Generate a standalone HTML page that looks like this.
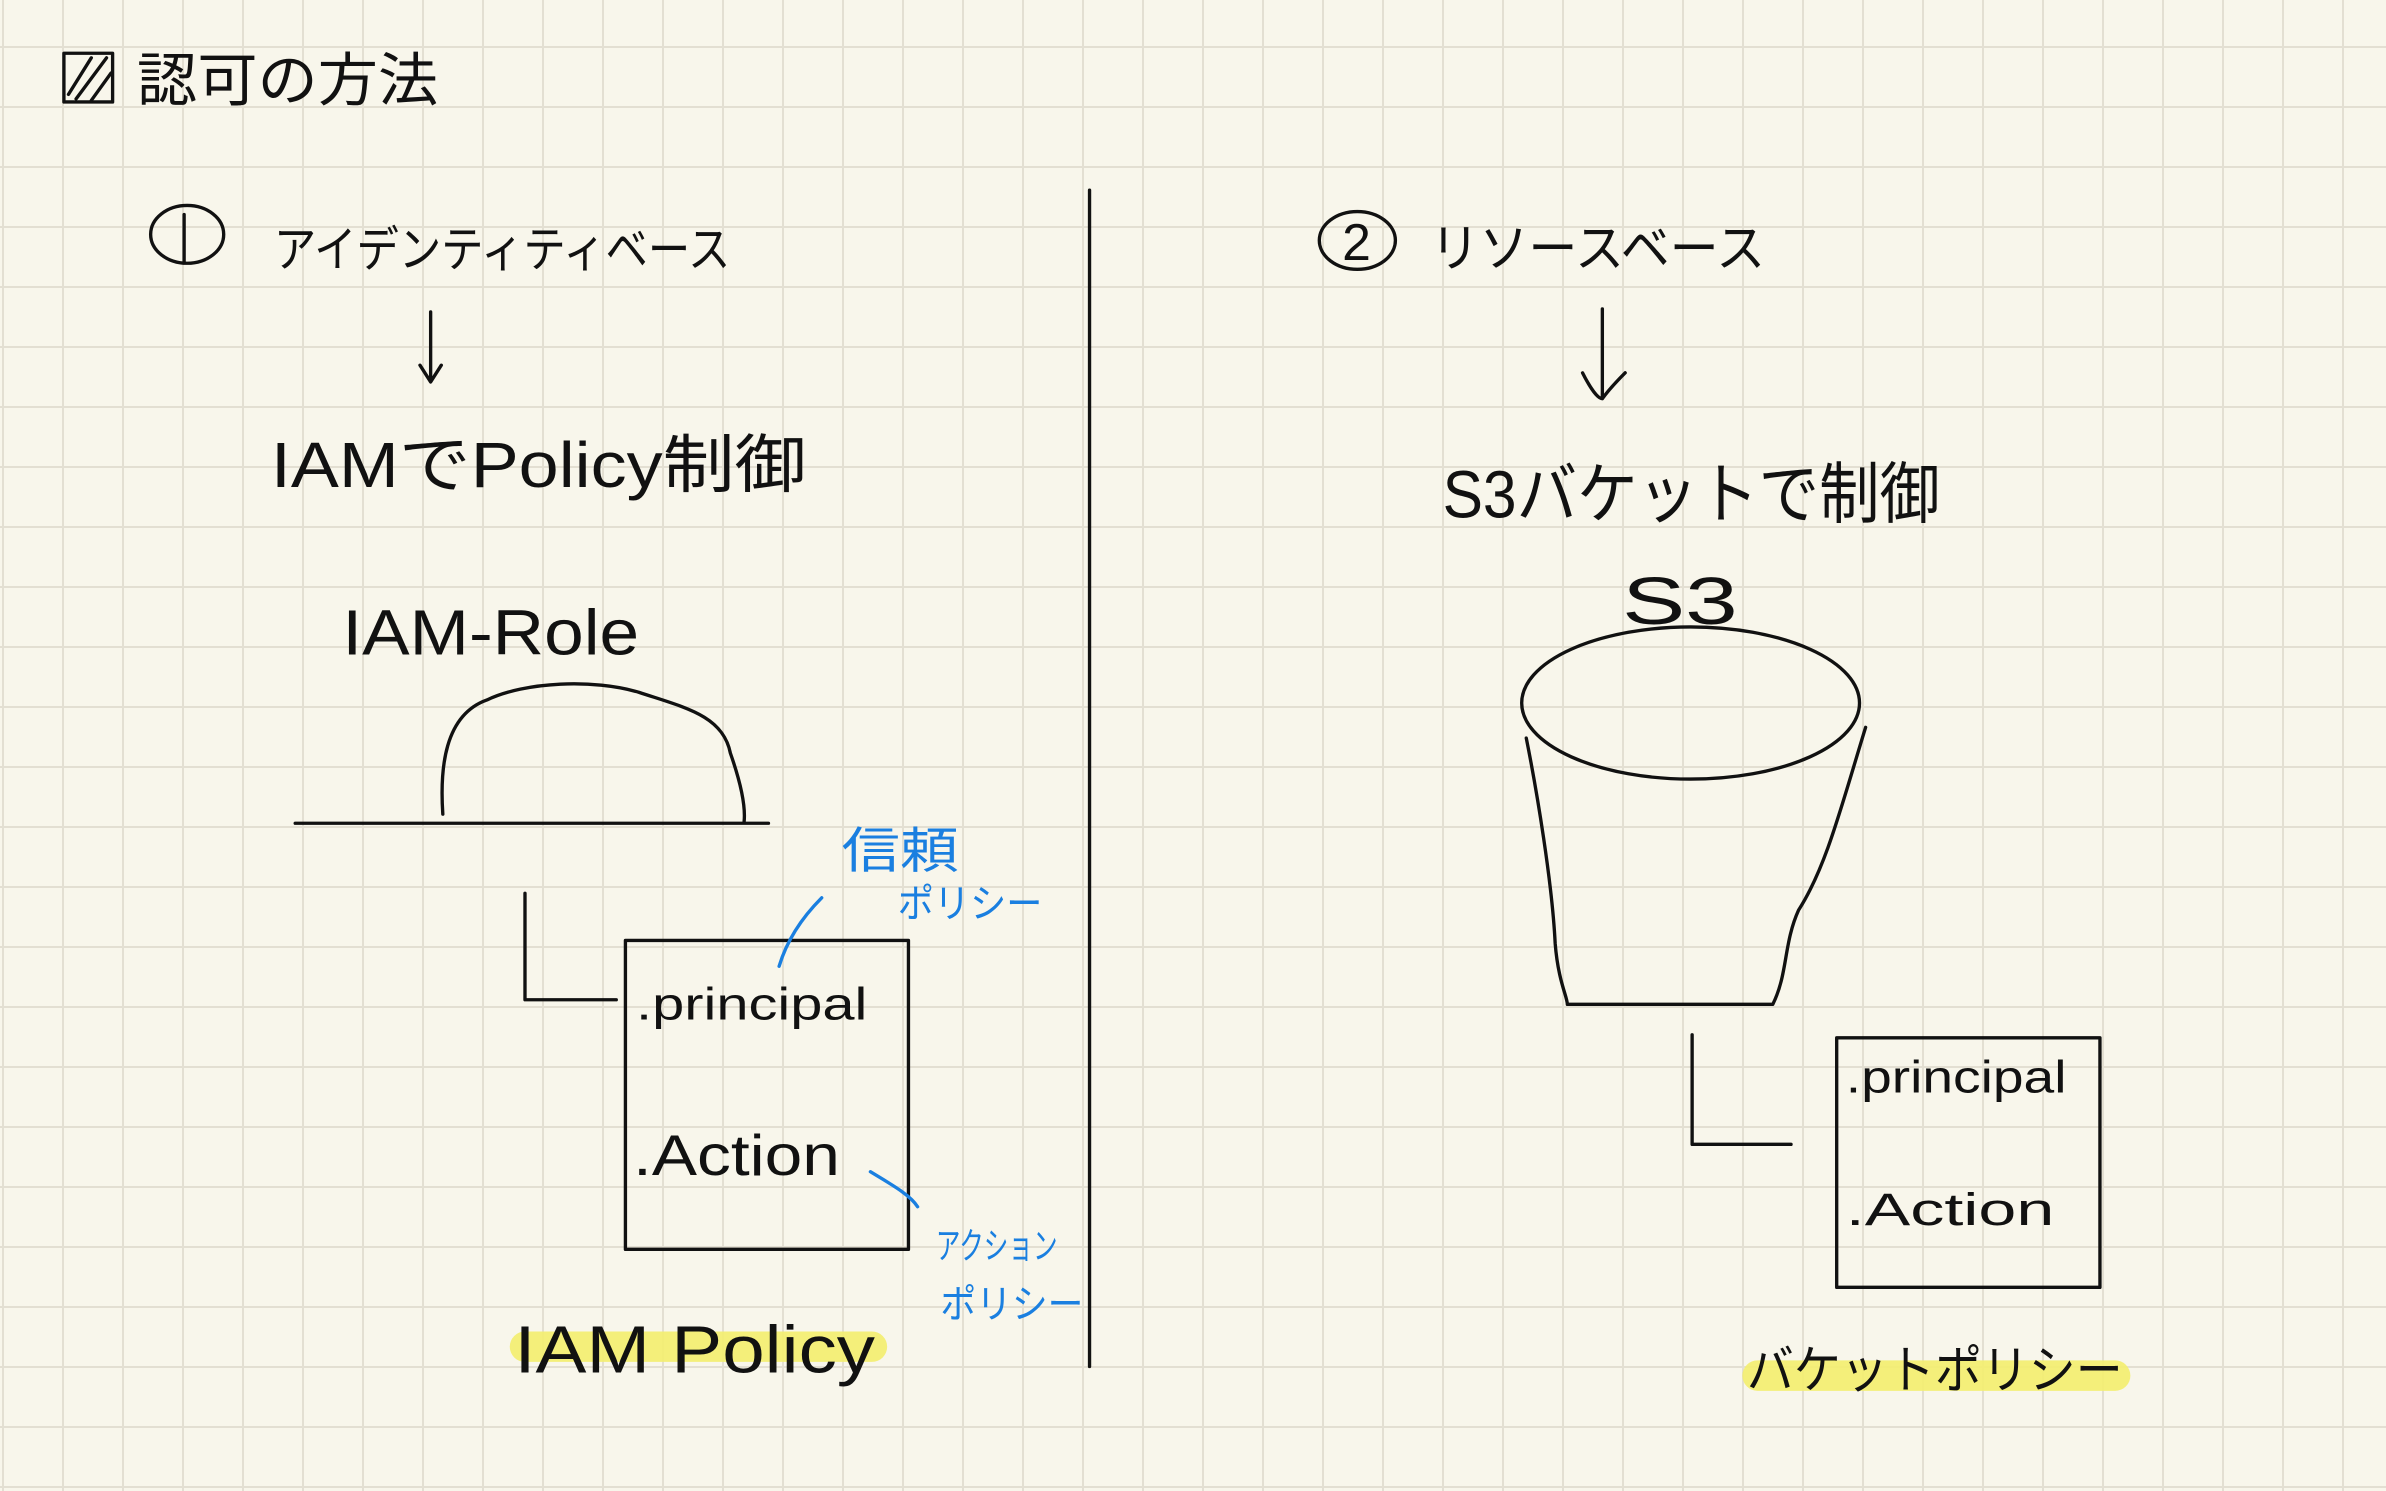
<!DOCTYPE html>
<html><head><meta charset="utf-8"><style>
html,body{margin:0;padding:0;background:#f8f6eb;}
svg{display:block}
text{font-family:"Liberation Sans","Noto Sans CJK JP",sans-serif;fill:#111;}
.b{fill:#1a7fe0}
</style></head><body>
<svg width="2386" height="1491" viewBox="0 0 2386 1491" xmlns="http://www.w3.org/2000/svg">
<defs>
<pattern id="g" x="2" y="46" width="60" height="60" patternUnits="userSpaceOnUse">
<path d="M0 0V60M0 0H60" stroke="#e3dfd2" stroke-width="4" fill="none"/>
</pattern>
</defs>
<rect width="2386" height="1491" fill="#f8f6eb"/>
<rect width="2386" height="1491" fill="url(#g)"/>
<g transform="scale(1.5217)" fill="none" stroke="#111" stroke-width="2.2" stroke-linecap="round" stroke-linejoin="round">
<path d="M345 885H573" stroke="#f3ee6e" stroke-width="20" opacity="0.9"/>
<path d="M1155 904H1390" stroke="#f3ee6e" stroke-width="20" opacity="0.9"/>
<rect x="42" y="35" width="32" height="32"/>
<path d="M45 62L60 38M50 65L70 38M60 66L73 48"/>
<ellipse cx="123" cy="154" rx="24" ry="19"/>
<path d="M121 141V172"/>
<path d="M283 205V250M276 240L283 251L290 240"/>
<path d="M194 541H505"/>
<path d="M291 535C289 505 292 470 320 460C345 448 390 446 420 455C450 465 475 470 480 495C487 515 490 530 489 540"/>
<path d="M345 587V657H405"/>
<rect x="411" y="618" width="186" height="203"/>
<path d="M716 125V898"/>
<ellipse cx="892" cy="158" rx="25" ry="19"/>
<path d="M1053 203V262M1040 245C1045 255 1050 262 1053 262C1058 255 1063 250 1068 245"/>
<ellipse cx="1111" cy="462" rx="111" ry="50"/>
<path d="M1003 485C1010 520 1020 580 1022 620C1024 645 1030 655 1030 660H1165C1175 640 1172 620 1182 598C1200 570 1210 530 1226 478"/>
<path d="M1112 680V752H1177"/>
<rect x="1207" y="682" width="173" height="164"/>
<path d="M512 635C518 615 530 600 540 590" stroke="#1a7fe0"/>
<path d="M572 770C585 778 598 785 603 793" stroke="#1a7fe0"/>
</g>
<g transform="scale(1.5217)">
<text x="90" y="66" font-size="38" textLength="198" lengthAdjust="spacingAndGlyphs">認可の方法</text>
<text x="180" y="175" font-size="32" textLength="300" lengthAdjust="spacingAndGlyphs">アイデンティティベース</text>
<text x="178" y="320" font-size="42" textLength="352" lengthAdjust="spacingAndGlyphs">IAMでPolicy制御</text>
<text x="225" y="430" font-size="42" textLength="195" lengthAdjust="spacingAndGlyphs">IAM-Role</text>
<text x="418" y="670" font-size="30" textLength="152" lengthAdjust="spacingAndGlyphs">.principal</text>
<text x="416" y="772" font-size="38" textLength="136" lengthAdjust="spacingAndGlyphs">.Action</text>
<text class="b" x="553" y="570" font-size="32" textLength="77" lengthAdjust="spacingAndGlyphs">信頼</text>
<text class="b" x="590" y="603" font-size="26" textLength="95" lengthAdjust="spacingAndGlyphs">ポリシー</text>
<text class="b" x="615" y="827" font-size="24" textLength="80" lengthAdjust="spacingAndGlyphs">アクション</text>
<text class="b" x="618" y="866" font-size="26" textLength="94" lengthAdjust="spacingAndGlyphs">ポリシー</text>
<text x="338" y="902" font-size="44" textLength="237" lengthAdjust="spacingAndGlyphs">IAM Policy</text>
<text x="882" y="171" font-size="34">2</text>
<text x="940" y="175" font-size="34" textLength="220" lengthAdjust="spacingAndGlyphs">リソースベース</text>
<text x="948" y="340" font-size="44" textLength="327" lengthAdjust="spacingAndGlyphs">S3バケットで制御</text>
<text x="1066" y="410" font-size="44" textLength="76" lengthAdjust="spacingAndGlyphs">S3</text>
<text x="1213" y="718" font-size="30" textLength="145" lengthAdjust="spacingAndGlyphs">.principal</text>
<text x="1213" y="805" font-size="30" textLength="137" lengthAdjust="spacingAndGlyphs">.Action</text>
<text x="1148" y="912" font-size="34" textLength="247" lengthAdjust="spacingAndGlyphs">バケットポリシー</text>
</g>
</svg>
</body></html>
